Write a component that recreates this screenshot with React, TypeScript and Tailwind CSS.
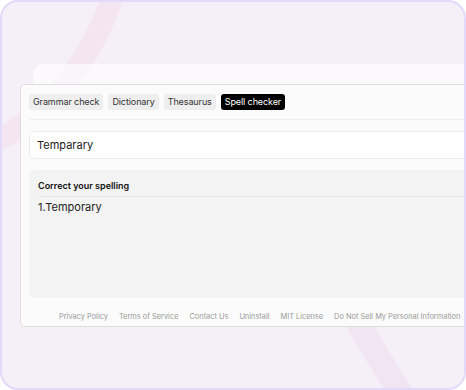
import React from "react";

const tabs = ["Grammar check", "Dictionary", "Thesaurus", "Spell checker"];
const links = [
  "Privacy Policy",
  "Terms of Service",
  "Contact Us",
  "Uninstall",
  "MIT License",
  "Do Not Sell My Personal Information",
];

export default function App() {
  return (
    <div
      className="relative w-[466px] h-[390px] overflow-hidden rounded-[18px] border-2 border-[#e2dafb] bg-[#f5eff7]"
      style={{ fontFamily: "Inter, 'Noto Sans', sans-serif" }}
    >
      {/* decorative bands */}
      <svg className="absolute inset-0" width="466" height="390" viewBox="0 0 466 390" fill="none">
        <path d="M110 -4 C 90 55, 55 105, -6 140" stroke="#f0dcef" strokeWidth="22" strokeOpacity="0.55" />
        <path d="M356 320 C 372 350, 386 370, 402 396" stroke="#f0dcef" strokeWidth="24" strokeOpacity="0.5" />
      </svg>

      <div className="relative pt-[62px]">
        {/* ghost card behind */}
        <div className="ml-[31px] w-[480px] h-[22px] rounded-t-[10px] bg-white/60" />

        {/* main card */}
        <div className="ml-[18px] w-[500px] -mt-[2px] rounded-[5px] border border-[#dedede] bg-[#fbfbfb]">
          <div className="px-[8px] pt-[9px]">
            <div className="flex gap-[5px]">
              {tabs.map((t) => (
                <span
                  key={t}
                  className={
                    t === "Spell checker"
                      ? "h-[16px] px-[4px] rounded-[3px] bg-black text-white text-[9px] tracking-[-0.1px] leading-[16px]"
                      : "h-[16px] px-[4px] rounded-[3px] bg-[#eeeeee] text-[#333] text-[9px] tracking-[-0.1px] leading-[16px]"
                  }
                >
                  {t}
                </span>
              ))}
            </div>
            <div className="mt-[9px] h-px bg-[#efefef]" />

            <div className="mt-[11px] h-[28px] rounded-[6px] border border-[#ececec] bg-white pl-[7px] flex items-center text-[11px] text-[#222]">
              Temparary
            </div>

            <div className="mt-[11px] h-[128px] rounded-[6px] bg-[#f3f3f3] px-[9px] pt-[10px]">
              <div className="text-[9px] font-semibold text-[#111] leading-[12px]">Correct your spelling</div>
              <div className="mt-[4px] h-px bg-[#e6e6e6]" />
              <div className="mt-[4px] text-[11px] text-[#222] leading-[12px]">1.Temporary</div>
            </div>
          </div>

          <div className="h-[28px] flex items-end pb-[4px] gap-[11px] pl-[38px] text-[7.4px] leading-[10px] text-[#9a9a9a]">
            {links.map((l) => (
              <span key={l} className="whitespace-nowrap">{l}</span>
            ))}
          </div>
        </div>
      </div>
    </div>
  );
}
